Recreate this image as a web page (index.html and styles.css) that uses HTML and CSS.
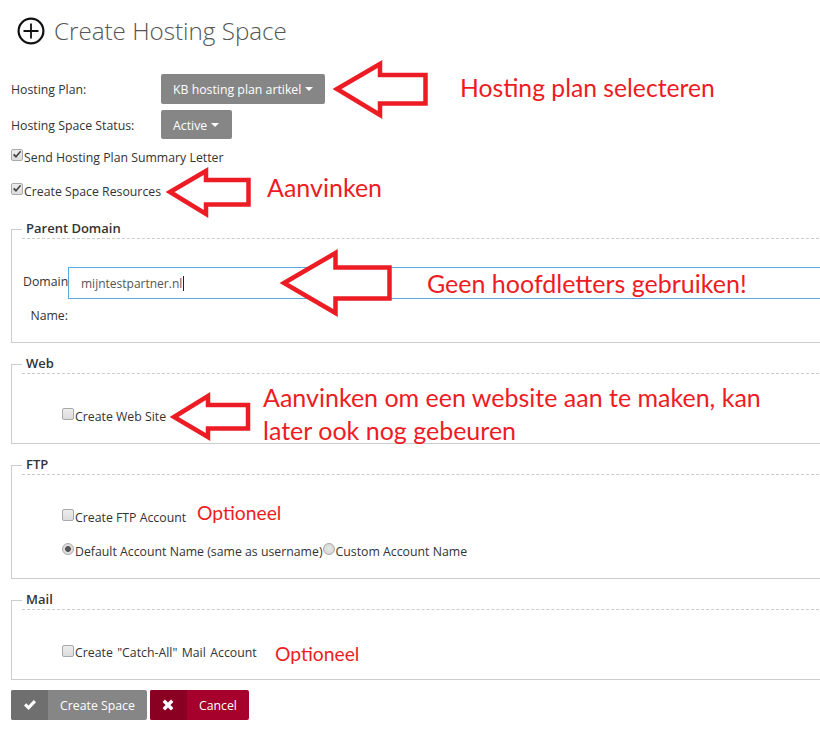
FILE: index.html
```html
<!DOCTYPE html>
<html lang="nl">
<head>
<meta charset="utf-8">
<title>Create Hosting Space</title>
<link rel="stylesheet" href="styles.css">
</head>
<body>
<main class="page">
  <h1 class="title">
    <svg class="title-icon" viewBox="0 0 28 28" aria-hidden="true"><circle cx="14" cy="14" r="12.4" fill="none" stroke="#111" stroke-width="2.2"/><path d="M6.5 14h15M14 6.5v15" fill="none" stroke="#111" stroke-width="1.8"/></svg>
    <span>Create Hosting Space</span>
  </h1>
  <div class="form-row plan-row">
    <span class="row-label">Hosting Plan:</span>
    <button class="dropdown" type="button">KB hosting plan artikel<i class="caret"></i></button>
  </div>
  <div class="form-row status-row">
    <span class="row-label">Hosting Space Status:</span>
    <button class="dropdown" type="button">Active<i class="caret"></i></button>
  </div>
  <label class="check send-check"><input type="checkbox" checked>Send Hosting Plan Summary Letter</label>
  <label class="check resources-check"><input type="checkbox" checked>Create Space Resources</label>

  <fieldset class="group domain-group">
    <legend>Parent Domain</legend>
    <div class="domain-row">
      <span class="domain-label">Domain Name:</span>
      <div class="domain-input">mijntestpartner.nl<i class="cursor"></i></div>
    </div>
  </fieldset>

  <fieldset class="group web-group">
    <legend>Web</legend>
    <label class="check inner"><input type="checkbox">Create Web Site</label>
  </fieldset>

  <fieldset class="group ftp-group">
    <legend>FTP</legend>
    <label class="check inner"><input type="checkbox">Create FTP Account</label>
    <div class="radios">
      <label class="check"><input class="radio on" type="radio" name="acc" checked>Default Account Name (same as username)</label>
      <label class="check"><input class="radio" type="radio" name="acc">Custom Account Name</label>
    </div>
  </fieldset>

  <fieldset class="group mail-group">
    <legend>Mail</legend>
    <label class="check inner"><input type="checkbox">Create "Catch-All" Mail Account</label>
  </fieldset>

  <div class="actions">
    <button class="action grey" type="button">
      <span class="action-icon"><svg viewBox="0 0 14 12" aria-hidden="true"><path d="M1 6.5l2.2-2.2 2.3 2.3L10.8 1 13 3.2 5.6 11z" fill="#fff"/></svg></span>
      <span class="action-text">Create Space</span>
    </button>
    <button class="action red" type="button">
      <span class="action-icon"><svg viewBox="0 0 12 12" aria-hidden="true"><path d="M3 .6L6 3.6 9 .6 11.4 3 8.4 6l3 3L9 11.4l-3-3-3 3L.6 9l3-3-3-3z" fill="#fff"/></svg></span>
      <span class="action-text">Cancel</span>
    </button>
  </div>
</main>

<svg class="arrows" viewBox="0 0 820 738" aria-hidden="true">
  <polygon points="337,89 380,64 380,75 425.5,75 425.5,103.5 380,103.5 380,115"/>
  <polygon points="170,192 206,171 206,180 248.5,180 248.5,204.5 206,204.5 206,214"/>
  <polygon points="284,283 335.5,253 335.5,267.5 389.5,267.5 389.5,298.5 335.5,298.5 335.5,313"/>
  <polygon points="174,417 208,396 208,405 248,405 248,428.5 208,428.5 208,437"/>
</svg>
<p class="note n-plan">Hosting plan selecteren</p>
<p class="note n-check">Aanvinken</p>
<p class="note n-caps">Geen hoofdletters gebruiken!</p>
<p class="note n-web">Aanvinken om een website aan te maken, kan<br>later ook nog gebeuren</p>
<p class="note n-ftp">Optioneel</p>
<p class="note n-mail">Optioneel</p>
</body>
</html>
```
FILE: styles.css
```css
html, body {
  margin: 0;
  padding: 0;
  background: #fff;
}
body {
  width: 820px;
  height: 738px;
  overflow: hidden;
  position: relative;
  font-family: "Open Sans", "Noto Sans", sans-serif;
  font-size: 12.3px;
  color: #333;
}
.page {
  width: 840px;
  padding: 17px 0 0 11px;
  box-sizing: border-box;
}
.title {
  display: flex;
  align-items: center;
  gap: 9px;
  margin: 0 0 30px 6px;
  height: 27px;
  font-size: 24.2px;
  font-weight: 300;
  color: #555;
}
.title-icon {
  width: 28px;
  height: 28px;
  flex: none;
}
.form-row {
  display: flex;
  align-items: center;
}
.row-label {
  width: 150px;
  flex: none;
}
.status-row {
  margin-top: 6px;
}
.status-row .row-label {
  padding-top: 1px;
}
.dropdown {
  display: inline-flex;
  align-items: center;
  height: 30px;
  padding: 0 12px;
  border: 0;
  border-radius: 2px;
  background: #868686;
  color: #fff;
  font: inherit;
}
.status-row .dropdown {
  height: 29px;
  padding: 1px 13px 0 12px;
}
.caret {
  width: 0;
  height: 0;
  margin-left: 4px;
  border-top: 4px solid #fff;
  border-left: 4px solid transparent;
  border-right: 4px solid transparent;
}
.check {
  display: flex;
  align-items: flex-start;
  line-height: 17px;
}
.check input {
  appearance: none;
  width: 12px;
  height: 12px;
  margin: 0 1px 0 0;
  flex: none;
  box-sizing: border-box;
  border: 1px solid #a9a9a9;
  border-radius: 2px;
  background: linear-gradient(#ededed, #dcdcdc);
}
.check input:checked:not(.radio) {
  background: url("data:image/svg+xml,%3Csvg xmlns='http://www.w3.org/2000/svg' viewBox='0 0 12 12'%3E%3Cpath d='M2 6l1.4-1.2L5 6.4 9 1.8l1.2 1L5 9z' fill='%23444'/%3E%3C/svg%3E") center/12px no-repeat, linear-gradient(#ededed, #dcdcdc);
}
.check .radio {
  border-radius: 50%;
  background: radial-gradient(circle, #e6e6e6, #d4d4d4);
}
.check .radio.on {
  background: radial-gradient(circle, #555 0 2.6px, #dedede 3.2px);
}
.send-check {
  margin-top: 10px;
}
.resources-check {
  margin-top: 17px;
}
.group {
  margin: 12px 0 0;
  padding: 0 0 0 50px;
  border: 1px solid #ccc;
  min-width: 0;
}
.group legend {
  display: block;
  width: calc(100% + 40px);
  box-sizing: border-box;
  margin-left: -40px;
  padding: 0 0 1px 4px;
  border-bottom: 1px dashed #ccc;
  font-size: 13px;
  font-weight: 600;
  line-height: 17px;
  color: #333;
}
.domain-group {
  margin-top: 20px;
  height: 121px;
  padding-left: 11px;
}
.domain-group legend {
  width: calc(100% + 1px);
  margin-left: -1px;
}
.domain-row {
  display: flex;
  margin-top: 28px;
}
.domain-label {
  width: 45px;
  margin-top: -2px;
  flex: none;
  text-align: right;
  line-height: 34px;
}
.domain-input {
  flex: 1;
  height: 32px;
  padding-left: 12px;
  box-sizing: border-box;
  border: 1px solid #5ea8e2;
  font-size: 12px;
  line-height: 32px;
  color: #555;
}
.cursor {
  display: inline-block;
  width: 1px;
  height: 15px;
  margin-left: 1px;
  vertical-align: -3px;
  background: #222;
}
.web-group {
  height: 87px;
}
.web-group .inner {
  margin-top: 34px;
}
.ftp-group {
  height: 121px;
}
.ftp-group .inner {
  margin-top: 34px;
}
.radios {
  display: flex;
  margin-top: 17px;
}
.radios .radio {
  margin-right: 1px;
}
.mail-group {
  height: 87px;
}
.mail-group .inner {
  margin-top: 35px;
  line-height: 15px;
  word-spacing: 1.2px;
}
.actions {
  display: flex;
  gap: 3px;
  margin-top: 10px;
}
.action {
  display: flex;
  align-items: stretch;
  height: 30px;
  padding: 0;
  border: 0;
  border-radius: 2px;
  overflow: hidden;
  color: #fff;
  font: inherit;
}
.action-icon {
  width: 37px;
  display: flex;
  align-items: center;
  justify-content: center;
}
.action-icon svg {
  width: 14px;
  height: 12px;
}
.action-text {
  display: flex;
  align-items: center;
  padding: 0 12px;
}
.grey {
  background: #868686;
}
.grey .action-icon {
  background: #6f6f6f;
}
.red {
  background: #a6002c;
}
.red .action-icon {
  background: #8a0023;
}
.arrows {
  position: absolute;
  left: 0;
  top: 0;
  width: 820px;
  height: 738px;
  pointer-events: none;
}
.arrows polygon {
  fill: #fff;
  stroke: #ed1c24;
  stroke-width: 4.5;
  stroke-linejoin: miter;
  stroke-miterlimit: 10;
}
.note {
  position: absolute;
  margin: 0;
  font-family: Lato, "Open Sans", sans-serif;
  font-size: 25px;
  line-height: 33px;
  color: #ed1c24;
  white-space: nowrap;
}
.n-plan { left: 460px; top: 71px; font-size: 24.7px; }
.n-check { left: 267px; top: 171px; }
.n-caps { left: 427px; top: 267px; }
.n-web { left: 263px; top: 381px; }
.n-ftp { left: 197px; top: 496px; font-size: 19.3px; }
.n-mail { left: 275px; top: 637px; font-size: 19.3px; }
```
